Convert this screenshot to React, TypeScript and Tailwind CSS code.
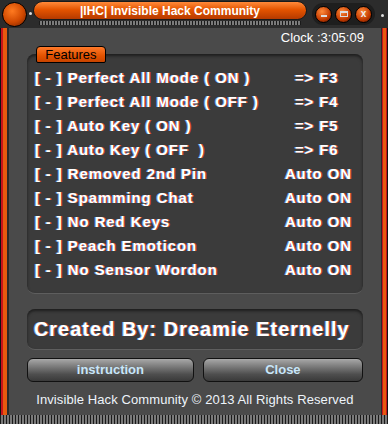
import React from "react";

const rows: { label: string; key: string }[] = [
  { label: "Perfect All Mode ( ON )", key: "=> F3" },
  { label: "Perfect All Mode ( OFF )", key: "=> F4" },
  { label: "Auto Key ( ON )", key: "=> F5" },
  { label: "Auto Key ( OFF  )", key: "=> F6" },
  { label: "Removed 2nd Pin", key: "Auto ON" },
  { label: "Spamming Chat", key: "Auto ON" },
  { label: "No Red Keys", key: "Auto ON" },
  { label: "Peach Emoticon", key: "Auto ON" },
  { label: "No Sensor Wordon", key: "Auto ON" },
];

function Grille({ className = "" }: { className?: string }) {
  return (
    <div
      className={`bg-[repeating-linear-gradient(90deg,#1a1a1a_0px,#1a1a1a_1px,#7a7a7a_1px,#7a7a7a_3px)] ${className}`}
    />
  );
}

function Orb({ children }: { children?: React.ReactNode }) {
  return (
    <div className="flex h-[17px] w-[17px] items-center justify-center rounded-full border border-black bg-[radial-gradient(circle_at_40%_30%,#ff8a3a,#c23a00_60%,#5a1500)]">
      {children}
    </div>
  );
}

function Rail({ side }: { side: "left" | "right" }) {
  return (
    <div className="flex w-full flex-1 flex-col">
      <div
        className={`flex-1 ${
          side === "left"
            ? "bg-[linear-gradient(90deg,#111_0px,#111_1px,#c8141a_1px,#c8141a_3px,#e65a0f_3px,#e65a0f_7px,#2a2a2a_7px)]"
            : "bg-[linear-gradient(90deg,#2a2a2a_0px,#2a2a2a_1px,#c8141a_1px,#c8141a_2px,#e65a0f_2px,#e65a0f_5px,#c8141a_5px,#c8141a_6px,#111_6px)]"
        }`}
      />
    </div>
  );
}

export default function App() {
  return (
    <div className="flex h-[424px] w-[388px] flex-col overflow-hidden bg-[#2c2c2c] font-['Liberation_Sans',Arial,sans-serif]">
      {/* title bar */}
      <div className="flex h-[28px] items-start">
        <div className="ml-[2px] mt-[2px] h-[25px] w-[25px] rounded-full border border-black bg-[radial-gradient(circle_at_40%_35%,#ff7a20,#d04800_55%,#6a1e00)]" />
        <div className="ml-[2px] mt-[12px] h-[3px] w-[3px] rounded-full bg-[#ddd]" />
        <div className="ml-[1px] mt-[1px] flex w-[274px] flex-col">
          <div className="flex h-[19px] items-center justify-center rounded-[10px] border border-[#1a1a1a] bg-[linear-gradient(180deg,#ff8a3a_0%,#e55400_45%,#b53a00_100%)] text-[12px] font-bold text-white">
            |IHC| Invisible Hack Community
          </div>
          <Grille className="mx-[6px] mt-[1px] h-[4px]" />
        </div>
        <div className="ml-[5px] mt-[3px] flex h-[22px] items-center gap-[3px] rounded-[11px] bg-[#1e1e1e] px-[3px]">
          <Orb>
            <div className="mt-[4px] h-[2px] w-[6px] bg-[#ddd]" />
          </Orb>
          <Orb>
            <div className="h-[6px] w-[8px] border border-[#ddd] border-t-2" />
          </Orb>
          <Orb>
            <span className="text-[10px] font-bold leading-none text-[#eee]">x</span>
          </Orb>
        </div>
        <div className="ml-[6px] mt-[14px] h-[3px] w-[3px] rounded-full bg-[#ddd]" />
      </div>

      {/* body */}
      <div className="flex flex-1">
        <div className="flex w-[10px] flex-col">
          <Rail side="left" />
        </div>
        <div className="flex flex-1 flex-col bg-[#4a4a4a] px-[18px] pt-[2px]">
          <div className="mr-[-1px] text-right text-[13px] leading-[15px] text-white">Clock :3:05:09</div>
          <div className="relative z-10 ml-[9px] mt-[1px] mb-[-9px] flex h-[17px] w-[70px] items-center justify-center rounded-t-[4px] rounded-b-[2px] border border-black bg-[linear-gradient(180deg,#ff7a2a,#e25200_60%,#c84400)] text-[13px] leading-none text-black">
            Features
          </div>
          <div className="flex h-[240px] flex-col rounded-[8px] border-b border-[#5e5e5e] bg-[#3b3b3b] px-[8px] pt-[12px] shadow-[inset_0_2px_3px_#1e1e1e]">
            {rows.map((r) => (
              <div key={r.label} className="flex h-[24px] items-center text-[15px] font-bold tracking-[0.9px] text-white [text-shadow:1px_0_0_#d04020,-1px_0_0_#6aa0e0]">
                <span className="whitespace-pre">{`[ - ] ${r.label}`}</span>
                <span className={`ml-auto whitespace-nowrap ${r.key.startsWith("=>") ? "w-[60px]" : "w-[70px]"}`}>{r.key}</span>
              </div>
            ))}
          </div>
          <div className="mt-[15px] flex h-[41px] items-center rounded-[8px] border-b border-[#5e5e5e] bg-[#3b3b3b] px-[7px] text-[20px] font-bold tracking-[1px] text-white shadow-[inset_0_2px_3px_#1e1e1e] [text-shadow:1px_0_0_#c04020,-1px_0_0_#6aa0e0]">
            <span className="whitespace-nowrap">Created By: Dreamie Eternelly</span>
          </div>
          <div className="mt-[8px] flex gap-[9px]">
            {["instruction", "Close"].map((b) => (
              <div
                key={b}
                className={`flex h-[24px] items-center justify-center rounded-[6px] border border-[#111] bg-[linear-gradient(180deg,#a8a8a8_0%,#7a7a7a_35%,#4e4e4e_70%,#3a3a3a_100%)] text-[13px] font-bold text-[#c8e6fa] ${
                  b === "Close" ? "w-[160px]" : "w-[167px]"
                }`}
              >
                {b}
              </div>
            ))}
          </div>
          <div className="mt-[8px] text-center text-[13px] tracking-[0.1px] text-[#eef4fa]">
            Invisible Hack Community © 2013 All Rights Reserved
          </div>
        </div>
        <div className="flex w-[8px] flex-col">
          <Rail side="right" />
        </div>
      </div>
      <Grille className="h-[9px]" />
    </div>
  );
}
